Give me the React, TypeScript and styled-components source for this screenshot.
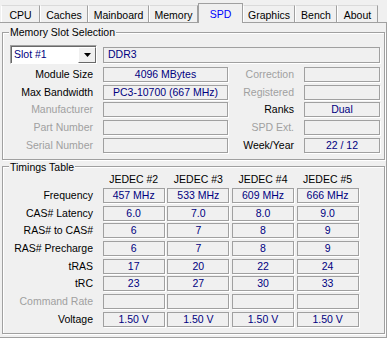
import React from 'react'
import styled, { createGlobalStyle } from 'styled-components'

const GlobalStyle = createGlobalStyle`
  html, body {
    margin: 0;
    padding: 0;
    background: #f0f0f0;
  }
  body {
    font-family: 'Liberation Sans', Arial, sans-serif;
    font-size: 10.5px;
    color: #000;
  }
`

const tabs = [
  { label: 'CPU', width: 39 },
  { label: 'Caches', width: 48 },
  { label: 'Mainboard', width: 61 },
  { label: 'Memory', width: 49 },
  { label: 'SPD', width: 45 },
  { label: 'Graphics', width: 52 },
  { label: 'Bench', width: 42 },
  { label: 'About', width: 41 },
]

type SlotRow = {
  label: string
  value: string
  muted?: boolean
  label2: string
  value2: string
  muted2?: boolean
}

const slotRows: SlotRow[] = [
  { label: 'Module Size', value: '4096 MBytes', label2: 'Correction', value2: '', muted2: true },
  { label: 'Max Bandwidth', value: 'PC3-10700 (667 MHz)', label2: 'Registered', value2: '', muted2: true },
  { label: 'Manufacturer', value: '', muted: true, label2: 'Ranks', value2: 'Dual' },
  { label: 'Part Number', value: '', muted: true, label2: 'SPD Ext.', value2: '', muted2: true },
  { label: 'Serial Number', value: '', muted: true, label2: 'Week/Year', value2: '22 / 12' },
]

const jedecs = ['JEDEC #2', 'JEDEC #3', 'JEDEC #4', 'JEDEC #5']

const timings: { label: string; values: string[]; muted?: boolean }[] = [
  { label: 'Frequency', values: ['457 MHz', '533 MHz', '609 MHz', '666 MHz'] },
  { label: 'CAS# Latency', values: ['6.0', '7.0', '8.0', '9.0'] },
  { label: 'RAS# to CAS#', values: ['6', '7', '8', '9'] },
  { label: 'RAS# Precharge', values: ['6', '7', '8', '9'] },
  { label: 'tRAS', values: ['17', '20', '22', '24'] },
  { label: 'tRC', values: ['23', '27', '30', '33'] },
  { label: 'Command Rate', values: ['', '', '', ''], muted: true },
  { label: 'Voltage', values: ['1.50 V', '1.50 V', '1.50 V', '1.50 V'] },
]

export default function App() {
  return (
    <>
      <GlobalStyle />
      <Window>
        <TabBar>
          {tabs.map((t) => (
            <Tab key={t.label} $width={t.width} $active={t.label === 'SPD'}>
              {t.label}
            </Tab>
          ))}
        </TabBar>
        <Panel>
          <Group>
            <Legend>Memory Slot Selection</Legend>
            <SlotGrid>
              <SlotSelect>
                <SelectText>Slot #1</SelectText>
                <DropButton>
                  <svg width='7' height='4' viewBox='0 0 7 4'>
                    <path d='M0 0h7L3.5 4z' fill='#000' />
                  </svg>
                </DropButton>
              </SlotSelect>
              <Field $align='left' $span={3}>
                DDR3
              </Field>
              {slotRows.map((r) => (
                <React.Fragment key={r.label}>
                  <Label $muted={r.muted}>{r.label}</Label>
                  <Field>{r.value}</Field>
                  <Label $muted={r.muted2}>{r.label2}</Label>
                  <Field>{r.value2}</Field>
                </React.Fragment>
              ))}
            </SlotGrid>
          </Group>
          <Group $spaced>
            <Legend>Timings Table</Legend>
            <TimingGrid>
              <span />
              {jedecs.map((j) => (
                <Head key={j}>{j}</Head>
              ))}
              {timings.map((t) => (
                <React.Fragment key={t.label}>
                  <TimingLabel $muted={t.muted}>{t.label}</TimingLabel>
                  {t.values.map((v, i) => (
                    <Field key={i}>{v}</Field>
                  ))}
                </React.Fragment>
              ))}
            </TimingGrid>
          </Group>
        </Panel>
      </Window>
    </>
  )
}

const Window = styled.div`
  width: 387px;
  height: 338px;
  overflow: hidden;
  background: #f0f0f0;
`

const TabBar = styled.div`
  display: flex;
  align-items: flex-end;
  height: 22px;
  padding-left: 1px;
`

const Tab = styled.div<{ $width: number; $active?: boolean }>`
  position: relative;
  z-index: 1;
  box-sizing: border-box;
  width: ${(p) => p.$width}px;
  height: ${(p) => (p.$active ? 20 : 17)}px;
  margin-bottom: ${(p) => (p.$active ? -1 : 0)}px;
  padding-top: ${(p) => (p.$active ? 3.5 : 3)}px;
  line-height: 12px;
  text-align: center;
  white-space: nowrap;
  background: #f0f0f0;
  color: ${(p) => (p.$active ? '#0000ff' : '#000')};
  border-top: 1px solid ${(p) => (p.$active ? '#a0a0a0' : '#dadada')};
  border-left: 1px solid ${(p) => (p.$active ? '#a0a0a0' : '#fff')};
  border-right: 1px solid #a0a0a0;
`

const Panel = styled.div`
  box-sizing: border-box;
  height: 316px;
  padding: 3px 1px 0 2px;
  border-top: 1px solid #a0a0a0;
  border-right: 1px solid #a0a0a0;
  border-bottom: 1px solid #a0a0a0;
`

const Group = styled.fieldset<{ $spaced?: boolean }>`
  margin: ${(p) => (p.$spaced ? 1 : 0)}px 0 0 0;
  padding: 7px 0 6px 0;
  min-inline-size: 0;
  border: 1px solid #a0a0a0;
  box-shadow: inset 1px 1px 0 #fff, 1px 1px 0 #fff;
`

const Legend = styled.legend`
  margin-left: 6px;
  padding: 0 1px;
  line-height: 12px;
  font-size: 10.5px;
  background: #f0f0f0;
`

const SlotGrid = styled.div`
  display: grid;
  grid-template-columns: 100px 125px 76px 76px;
  grid-template-rows: 19px repeat(5, 15px);
  row-gap: 2.75px;
  align-items: center;
`

const Label = styled.div<{ $muted?: boolean }>`
  padding-right: 10px;
  text-align: right;
  white-space: nowrap;
  line-height: 15px;
  color: ${(p) => (p.$muted ? '#a0a0a0' : '#000')};
`

const TimingLabel = styled(Label)`
  padding-right: 7px;
`

const Field = styled.div<{ $align?: 'left' | 'center'; $span?: number }>`
  box-sizing: border-box;
  height: ${(p) => (p.$span ? 16 : 15)}px;
  grid-column: span ${(p) => p.$span ?? 1};
  padding: 0 4px;
  line-height: 13px;
  text-align: ${(p) => p.$align ?? 'center'};
  white-space: nowrap;
  overflow: hidden;
  color: #000080;
  border: 1px solid #a0a0a0;
  box-shadow: 1px 1px 0 #fff;
`

const SlotSelect = styled.div`
  box-sizing: border-box;
  display: flex;
  align-items: stretch;
  width: 87px;
  height: 19px;
  margin-left: 7px;
  background: #fff;
  border: 1px solid;
  border-color: #a0a0a0 #fff #fff #a0a0a0;
  box-shadow: inset 1px 1px 0 #696969;
`

const SelectText = styled.div`
  flex: 1;
  padding: 1px 0 0 3px;
  line-height: 15px;
  color: #000080;
`

const DropButton = styled.div`
  box-sizing: border-box;
  display: flex;
  align-items: center;
  justify-content: center;
  width: 18px;
  margin: 1px 0 0 0;
  background: #f0f0f0;
  border: 1px solid;
  border-color: #fff #696969 #696969 #fff;
`

const TimingGrid = styled.div`
  display: grid;
  grid-template-columns: 97px repeat(4, 62px);
  grid-template-rows: 12.5px repeat(8, 15px);
  column-gap: 2.667px;
  row-gap: 2.7px;
  align-items: center;
  margin-top: -7px;
`

const Head = styled.div`
  text-align: center;
  line-height: 12px;
  white-space: nowrap;
`
